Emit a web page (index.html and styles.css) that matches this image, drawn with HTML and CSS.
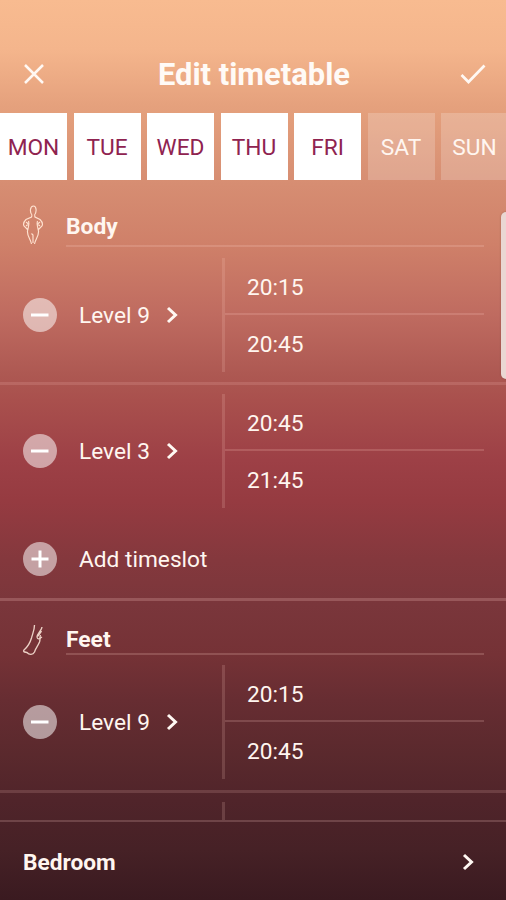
FILE: index.html
```html
<!DOCTYPE html>
<html lang="en">
<head>
<meta charset="utf-8">
<title>Edit timetable</title>
<link rel="stylesheet" href="styles.css">
</head>
<body>
<div class="app">
  <header class="header">
    <svg class="close" viewBox="0 0 20 20"><path d="M1 1L19 19M19 1L1 19"/></svg>
    <h1>Edit timetable</h1>
    <svg class="check" viewBox="0 0 26 20"><path d="M1.500 11L8.500 18L24.500 1.500"/></svg>
  </header>
  <nav class="days">
    <span class="day on">MON</span><span class="day on">TUE</span><span class="day on">WED</span><span class="day on">THU</span><span class="day on">FRI</span><span class="day">SAT</span><span class="day">SUN</span>
  </nav>
  <main class="list">
    <i class="scrollbar"></i>
    <section class="group">
      <div class="group-head">
        <svg class="figure" viewBox="0 0 22 40"><path d="M10 10C7.500 7 8 1 11.500 1C14.500 1 15 7 12.500 10M10 10L9.500 12L4 14.500C1.500 17 1 19 2 21L6 25M12.500 10L13 12L18 14.500C20.500 17 21 19 20 21L16 25M6.500 16C7.500 19 6.500 22 5.500 26C5 31 8.500 34 9.500 39M15.500 16C14.500 19 15.500 22 16.500 26C17 31 13.500 34 12.500 39M11 38V30L9.500 28.500"/><path d="M4 17L6.500 19L4 21M18 17L15.500 19L18 21"/></svg>
        <h2>Body</h2>
      </div>
      <div class="row">
        <span class="round"><svg viewBox="0 0 34 34"><path d="M8 17H25.500"/></svg></span>
        <span class="level">Level 9</span><svg class="chev" viewBox="0 0 12 18"><path d="M2 2L9.500 9L2 16"/></svg>
        <div class="times"><span>20:15</span><span>20:45</span></div>
      </div>
      <div class="row last">
        <span class="round"><svg viewBox="0 0 34 34"><path d="M8 17H25.500"/></svg></span>
        <span class="level">Level 3</span><svg class="chev" viewBox="0 0 12 18"><path d="M2 2L9.500 9L2 16"/></svg>
        <div class="times"><span>20:45</span><span>21:45</span></div>
      </div>
      <div class="add">
        <span class="round"><svg viewBox="0 0 34 34"><path d="M8.500 17H25.500M17 8.500V25.500"/></svg></span>
        <span class="level">Add timeslot</span>
      </div>
    </section>
    <section class="group feet">
      <div class="group-head">
        <svg class="foot" viewBox="0 0 22 32"><path d="M12.500 1C12.500 6 10.500 10 9.500 14C8 19 5.500 23 2 26C0.500 28 3 28 5 28.500C7 31 11 31 12.500 28C13.500 24 16 22 17.500 18C18.500 15 17.500 13 18.500 11"/><path d="M20 3C20 6 15 10 15 13C15.500 16 17 15 20 13M19.500 7L16 12"/></svg>
        <h2>Feet</h2>
      </div>
      <div class="row">
        <span class="round"><svg viewBox="0 0 34 34"><path d="M8 17H25.500"/></svg></span>
        <span class="level">Level 9</span><svg class="chev" viewBox="0 0 12 18"><path d="M2 2L9.500 9L2 16"/></svg>
        <div class="times"><span>20:15</span><span>20:45</span></div>
      </div>
      <div class="row next">
        <div class="times"></div>
      </div>
    </section>
  </main>
  <footer class="footer">
    <strong>Bedroom</strong>
    <svg class="chev" viewBox="0 0 12 18"><path d="M2 2L9.500 9L2 16"/></svg>
  </footer>
</div>
</body>
</html>
```

FILE: styles.css
```css
* { box-sizing: border-box; }
body { margin: 0; font-family: Roboto, "Liberation Sans", sans-serif; color: #fff6f0; }
svg { display: block; fill: none; stroke: #fff8f3; flex: none; }
.app {
  width: 506px; height: 900px; overflow: hidden;
  display: flex; flex-direction: column;
  background: linear-gradient(180deg, #f8bb90 0, #f4b58c 50px, #e5a17d 105px, #d68d72 185px, #cf8069 245px, #bf6b60 315px, #ad5852 375px, #a9504d 400px, #9d4046 460px, #963b41 500px, #84383d 560px, #7a363b 605px, #753236 655px, #672d32 700px, #5a292d 755px, #50242a 800px, #472227 850px, #3b1b21 900px);
}
.header { height: 113px; flex: none; display: flex; align-items: center; justify-content: space-between; padding: 35px 20px 0 24px; }
.header h1 { margin: 2px 0 0 4px; font-size: 30.9px; line-height: 36px; font-weight: 700; color: #fffaf6; }
.close { width: 20px; height: 20px; stroke-width: 2.5; }
.check { width: 26px; height: 20px; stroke-width: 2.7; }
.days { height: 67px; flex: none; display: grid; grid-template-columns: repeat(7, 67px); column-gap: 6.5px; }
.day { display: flex; align-items: center; justify-content: center; padding-top: 2px; font-size: 22.7px; background: rgba(255,255,255,.2); }
.day.on { background: #fff; color: #8f2350; }
.list { position: relative; flex: 1; min-height: 0; overflow: hidden; }
.scrollbar { position: absolute; right: -5px; top: 32px; width: 10px; height: 167px; border-radius: 5px; background: #ead7d3; box-shadow: 0 0 2px rgba(90,50,50,.4); }
.group-head { height: 67px; display: flex; margin-right: 22px; }
.group-head h2 { flex: 1; margin: 0; padding-top: 33px; font-size: 22.8px; line-height: 27px; font-weight: 700; border-bottom: 2px solid rgba(255,210,200,.2); }
.figure { width: 22px; height: 40px; margin: 25px 22px 0 22px; stroke: #ffe2d0; stroke-width: 1.15; }
.foot { width: 22px; height: 32px; margin: 23px 22px 0 22px; stroke: #ecd1c6; stroke-width: 1.35; }
.row { height: 138px; display: flex; align-items: center; padding: 11px 22px 10px 23px; border-bottom: 3px solid rgba(255,200,190,.16); }
.row.last { height: 133px; padding-top: 9px; border-bottom: 0; }
.feet .row { padding-top: 10px; padding-bottom: 11px; }
.feet .next { padding-top: 9px; padding-bottom: 12px; }
.round { width: 34px; height: 34px; flex: none; margin-right: 22px; border-radius: 50%; background: rgba(255,255,255,.53); }
.round svg { width: 34px; height: 34px; stroke: #fff; stroke-width: 3; }
.level { font-size: 22.7px; line-height: 28px; padding-top: 2px; white-space: nowrap; }
.row .level { width: 87px; }
.add .level { padding-top: 3px; }
.chev { width: 12px; height: 18px; stroke-width: 3; }
.times { width: 262px; height: 114px; flex: none; margin-left: auto; display: grid; grid-template-rows: 57px 57px; border-left: 3px solid rgba(255,205,195,.17); font-size: 22.7px; }
.times span { display: flex; align-items: center; padding: 2px 0 0 22px; }
.times span:first-child { padding-top: 4px; border-bottom: 2px solid rgba(255,205,195,.19); }
.add { height: 83px; display: flex; align-items: center; padding: 1px 23px 0; border-bottom: 3px solid rgba(255,205,200,.22); }
.feet .group-head { height: 54px; }
.feet h2 { padding-top: 25px; }
.footer { height: 80px; flex: none; display: flex; align-items: center; justify-content: space-between; padding: 2px 32px 0 23px; border-top: 2px solid rgba(255,205,200,.2); font-size: 22.7px; background: rgba(40,18,28,.04); }
```
